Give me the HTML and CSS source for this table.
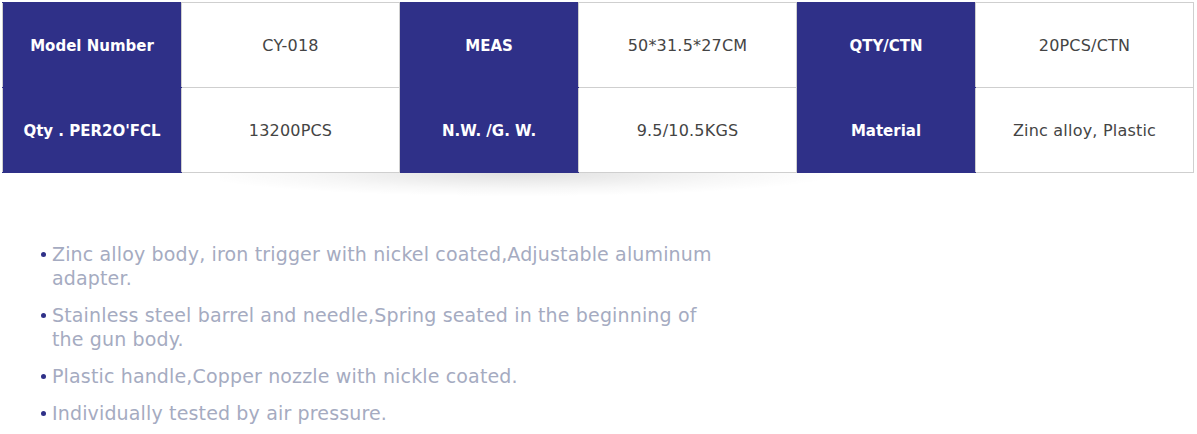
FILE: index.html
```
<!DOCTYPE html>
<html lang="en">
<head>
	<meta charset="UTF-8">
	<meta name="viewport" content="width=device-width, initial-scale=1.0">
	<title>Product Parameters</title>
	<link rel="stylesheet" href="styles.css">
</head>
<body>

	<table class="params">
		<colgroup>
			<col class="col-key">
			<col class="col-val">
			<col class="col-key">
			<col class="col-val">
			<col class="col-key">
			<col class="col-val">
		</colgroup>
		<tr>
			<th>Model Number</th>
			<td>CY-018</td>
			<th>MEAS</th>
			<td>50*31.5*27CM</td>
			<th>QTY/CTN</th>
			<td>20PCS/CTN</td>
		</tr>
		<tr>
			<th>Qty . PER2O'FCL</th>
			<td>13200PCS</td>
			<th>N.W. /G. W.</th>
			<td>9.5/10.5KGS</td>
			<th>Material</th>
			<td>Zinc alloy, Plastic</td>
		</tr>
	</table>
	<div class="table-shadow"></div>

	<ul class="features">
		<li>Zinc alloy body, iron trigger with nickel coated,Adjustable aluminum adapter.</li>
		<li>Stainless steel barrel and needle,Spring seated in the beginning of the gun body.</li>
		<li>Plastic handle,Copper nozzle with nickle coated.</li>
		<li>Individually tested by air pressure.</li>
	</ul>

</body>
</html>
```

FILE: styles.css
```
body {
	font-family: "DejaVu Sans", sans-serif;
	margin: 2px;
	background: #fff;
}
.params {
	border-collapse: collapse;
	table-layout: fixed;
	width: 1192px;
	border: 1px solid #cfcfcf;
}
.col-key {
	width: 179px;
}
.col-val {
	width: 218px;
}
.params th,
.params td {
	height: 83px;
	padding: 1px 0 0;
	text-align: center;
	border: 1px solid #cfcfcf;
}
.params th {
	background: #2f3088;
	color: #fff;
	font-size: 15px;
	font-weight: 600;
	border-color: #2f3088 #cfcfcf;
}
.params td {
	background: #fff;
	color: #444;
	font-size: 16px;
	letter-spacing: 0.2px;
}
.table-shadow {
	height: 26px;
	width: 620px;
	margin-left: 218px;
	background: radial-gradient(ellipse 58% 100% at 48% 0, rgba(0, 0, 0, 0.12), rgba(0, 0, 0, 0.03) 60%, rgba(0, 0, 0, 0) 90%);
}
.features {
	width: 668px;
	margin: 43px 0 0;
	padding: 0 0 0 50px;
	list-style: none;
}
.features li {
	position: relative;
	font-size: 19px;
	line-height: 24px;
	letter-spacing: 0.15px;
	color: #a5abc1;
	margin-bottom: 13px;
}
.features li::before {
	content: "";
	position: absolute;
	left: -11px;
	top: 10px;
	width: 5px;
	height: 5px;
	border-radius: 50%;
	background: #2f3088;
}
```
